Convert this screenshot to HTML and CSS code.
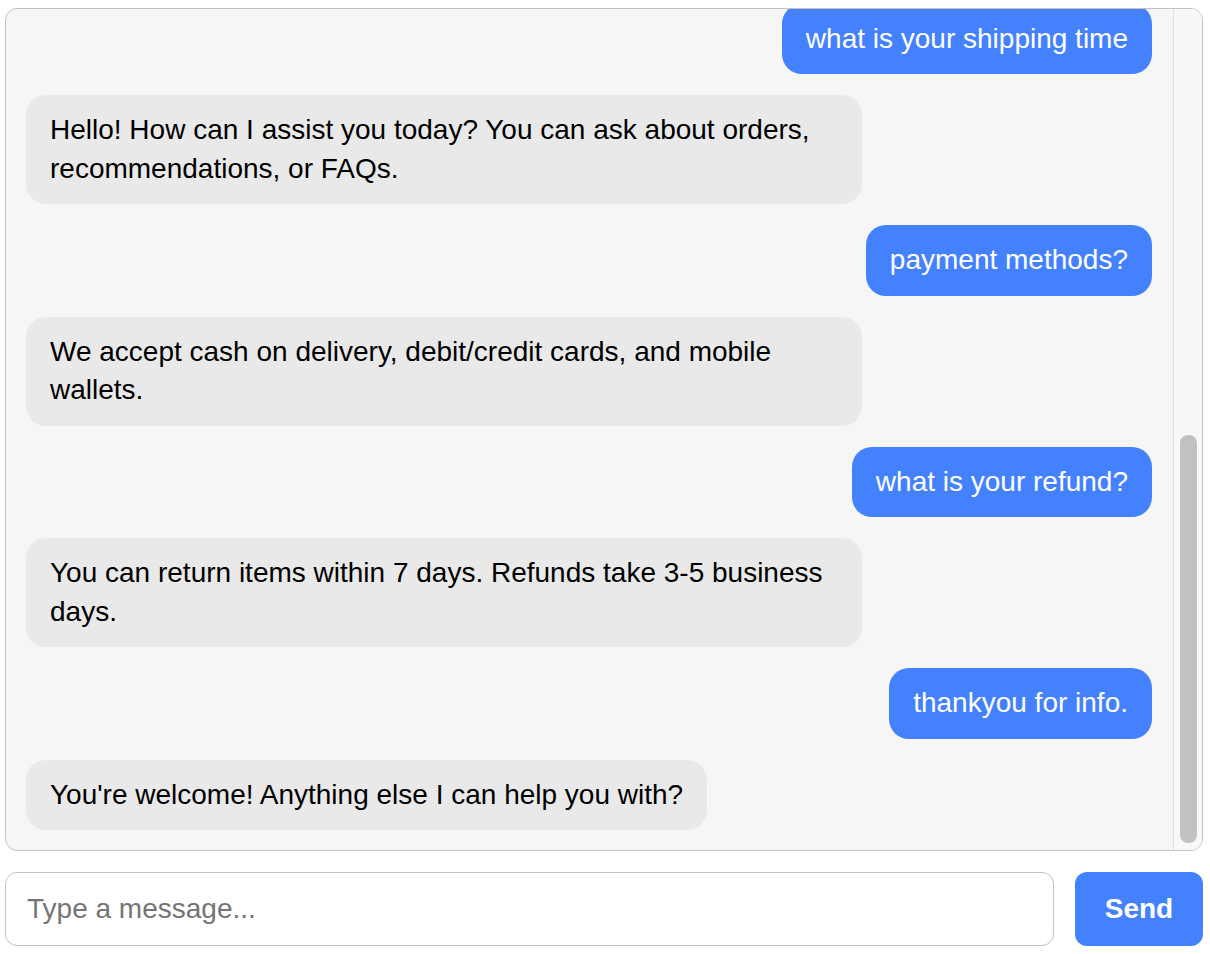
FILE: index.html
```html
<!DOCTYPE html>
<html lang="en">
<head>
<meta charset="utf-8">
<title>Chat</title>
<link rel="stylesheet" href="styles.css">
</head>
<body>
<div class="app">
  <div class="chat">
    <div class="viewport">
      <div class="messages">
        <div class="msg user">what is your shipping time</div>
        <div class="msg bot">Hello! How can I assist you today? You can ask about orders, recommendations, or FAQs.</div>
        <div class="msg user">payment methods?</div>
        <div class="msg bot">We accept cash on delivery, debit/credit cards, and mobile wallets.</div>
        <div class="msg user">what is your refund?</div>
        <div class="msg bot">You can return items within 7 days. Refunds take 3-5 business days.</div>
        <div class="msg user">thankyou for info.</div>
        <div class="msg bot">You're welcome! Anything else I can help you with?</div>
      </div>
    </div>
    <div class="scrollbar"><div class="thumb"></div></div>
  </div>
  <form class="composer" onsubmit="return false">
    <input class="input" type="text" placeholder="Type a message...">
    <button class="send" type="button">Send</button>
  </form>
</div>
</body>
</html>
```

FILE: styles.css
```css
* { box-sizing: border-box; }
html, body { margin: 0; padding: 0; background: #ffffff; }
body {
  font-family: "Liberation Sans", Arial, Helvetica, sans-serif;
  font-size: 28px;
  color: #000;
}
.app {
  height: 954px;
  padding: 8px 7px 8px 5px;
  display: flex;
  flex-direction: column;
  gap: 21px;
}
.chat {
  flex: 1;
  min-height: 0;
  background: #f6f6f6;
  border: 1px solid #c2c2c2;
  border-radius: 12px;
  overflow: hidden;
  display: flex;
}
.viewport {
  flex: 1;
  min-width: 0;
  overflow: hidden;
  display: flex;
  flex-direction: column-reverse;
}
.messages {
  padding: 20px 21px 20px 20px;
  display: flex;
  flex-direction: column;
  gap: 21px;
}
.msg {
  max-width: 70%;
  box-sizing: content-box;
  padding: 16px 24px;
  border-radius: 20px;
  line-height: 38.5px;
}
.user {
  align-self: flex-end;
  background: #4481ff;
  color: #ffffff;
}
.bot {
  align-self: flex-start;
  background: #e9e9e9;
  color: #000000;
}
.scrollbar {
  flex: none;
  width: 29px;
  background: #f8f8f8;
  border-left: 1px solid #e0e0e0;
  display: flex;
  flex-direction: column;
  justify-content: flex-end;
  padding: 0 5px 7px 6px;
}
.thumb {
  height: 408px;
  background: #c1c1c1;
  border-radius: 8px;
}
.composer {
  margin: 0;
  display: flex;
  gap: 21px;
  height: 74px;
  flex: none;
}
.input {
  flex: 1;
  height: 74px;
  border: 1px solid #c2c2c2;
  border-radius: 12px;
  padding: 0 21px;
  font-family: inherit;
  font-size: 28px;
  color: #000;
  background: #fff;
  outline: none;
}
.input::placeholder { color: #757575; }
.send {
  width: 128px;
  height: 74px;
  border: none;
  border-radius: 12px;
  background: #4481ff;
  color: #fff;
  font-family: inherit;
  font-size: 28px;
  font-weight: bold;
  cursor: pointer;
}
```
